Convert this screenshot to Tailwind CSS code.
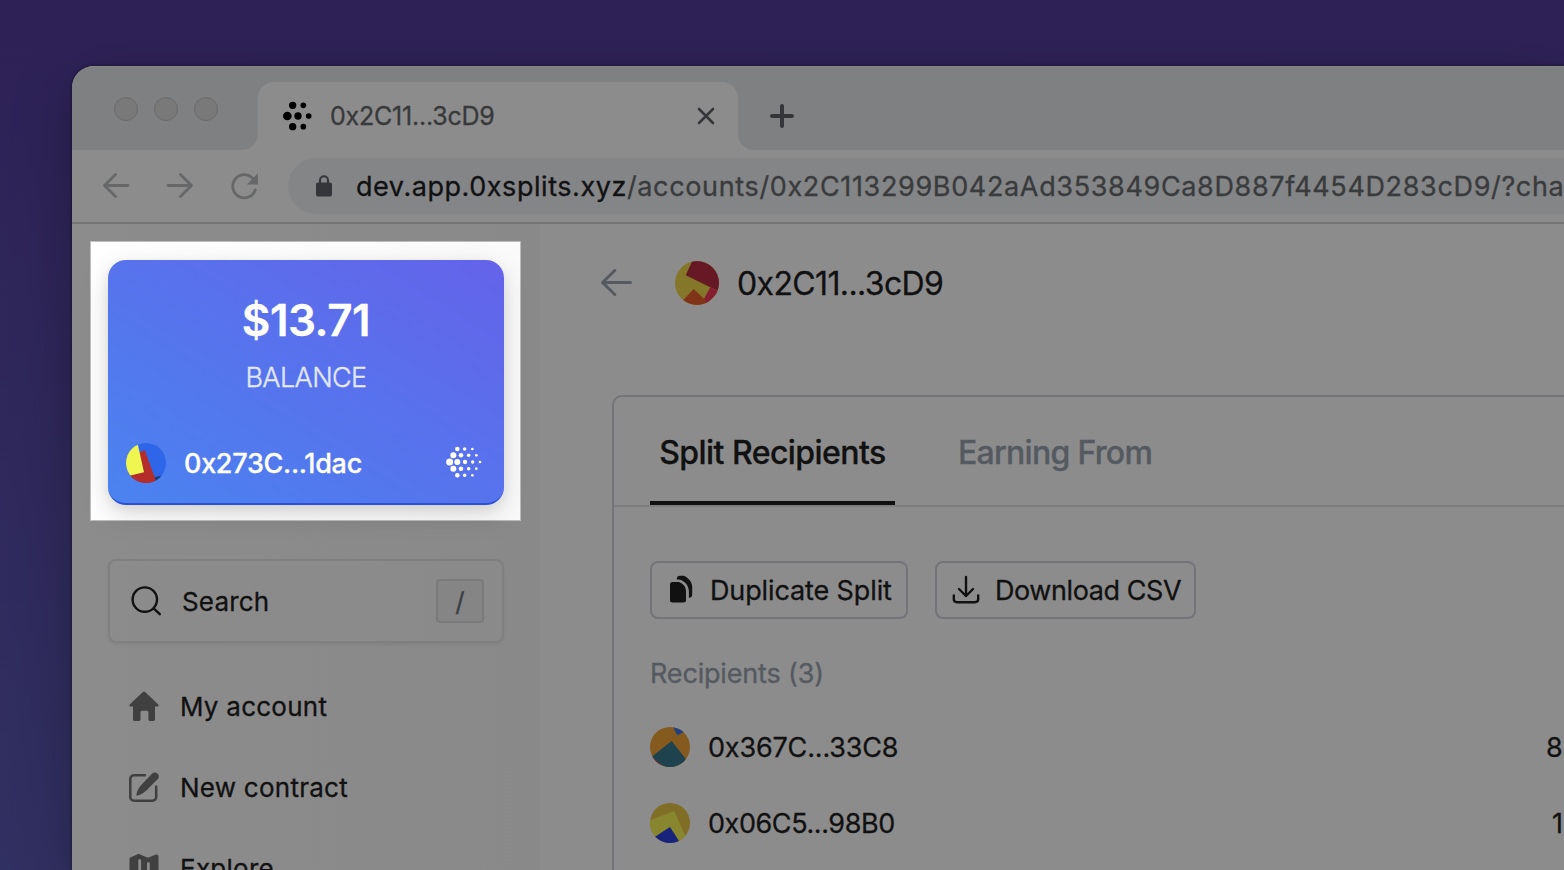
<!DOCTYPE html>
<html lang="en">
<head>
<meta charset="utf-8">
<title>0x2C11...3cD9</title>
<script src="https://cdn.jsdelivr.net/npm/@tailwindcss/browser@4"></script>
</head>
<body class="relative h-[870px] w-[1564px] overflow-hidden bg-gradient-to-b from-[#533c9c] to-[#5a58b2] pt-[66px] pl-[72px] font-['Inter',sans-serif] text-[#1f1f1f] [-webkit-text-stroke:0.3px]">
<div class="flex h-[804px] w-[1492px] flex-col overflow-hidden rounded-tl-[22px] bg-white shadow-[0_0_3px_1px_rgba(0,0,0,0.3),0_20px_60px_rgba(0,0,0,0.25)]">

  <!-- Tab strip -->
  <div class="flex h-[84px] shrink-0 border-t border-[#f4f4f4] bg-[#e7eaed]">
    <div class="flex w-[186px] gap-4 pt-[30px] pl-[42px]">
      <span class="size-6 rounded-full border border-[#bfc0bf] bg-[#dbdcdb]"></span>
      <span class="size-6 rounded-full border border-[#bfc0bf] bg-[#dbdcdb]"></span>
      <span class="size-6 rounded-full border border-[#bfc0bf] bg-[#dbdcdb]"></span>
    </div>
    <div class="relative mt-[15px] flex h-[68px] w-[480px] items-center rounded-t-[16px] bg-white pl-[25px]">
      <svg class="absolute bottom-0 -left-4 size-4" viewBox="0 0 16 16" fill="#fff"><path d="M16 0v16H0A16 16 0 0 0 16 0z"/></svg>
      <svg class="absolute -right-4 bottom-0 size-4" viewBox="0 0 16 16" fill="#fff"><path d="M0 0v16h16A16 16 0 0 1 0 0z"/></svg>
      <svg class="h-[30px] w-[29px]" viewBox="669 135 87 90" fill="#000"><circle cx="682" cy="180" r="13"/><circle cx="714" cy="180" r="11"/><circle cx="746" cy="180" r="8.5"/><circle cx="698" cy="148" r="11"/><circle cx="730" cy="148" r="8.5"/><circle cx="698" cy="212" r="11"/><circle cx="730" cy="212" r="8.5"/></svg>
      <span class="ml-[18px] text-[25px] leading-8 tracking-[-0.22px] whitespace-nowrap text-[#66686a]">0x2C11...3cD9</span>
      <svg class="absolute top-[25px] left-[439px] size-[18px]" viewBox="0 0 18 18" fill="none" stroke="#5f6368" stroke-width="2.6" stroke-linecap="round"><path d="M2 2l14 14M16 2L2 16"/></svg>
    </div>
    <svg class="mt-[37px] ml-[32px] size-6" viewBox="0 0 24 24" fill="none" stroke="#5f6368" stroke-width="4" stroke-linecap="round"><path d="M12 2v20M2 12h20"/></svg>
  </div>

  <!-- Toolbar -->
  <div class="flex h-[74px] shrink-0 items-center border-b-2 border-[#d5d6d8] bg-white pl-[30px]">
    <svg class="h-[26px] w-7 shrink-0" viewBox="0 0 28 26" fill="none" stroke="#b9bcbe" stroke-width="2.8" stroke-linecap="round" stroke-linejoin="round"><path d="M26 12.500H2.500M13.500 1.500l-11 11 11 11"/></svg>
    <svg class="ml-9 h-[26px] w-7 shrink-0" viewBox="0 0 28 26" fill="none" stroke="#b9bcbe" stroke-width="2.800" stroke-linecap="round" stroke-linejoin="round"><path d="M2 12.500h23.500M14.500 1.500l11 11-11 11"/></svg>
    <svg class="ml-[37px] h-7 w-[30px] shrink-0" viewBox="0 0 30 28" fill="none" stroke="#b9bcbe" stroke-width="2.800" stroke-linecap="round"><path d="M24.300 18A11.600 11.600 0 1 1 21.500 6"/><path d="M27 1.200v11.300H15.800z" fill="#b9bcbe" stroke="none"/></svg>
    <div class="ml-[27px] flex h-14 min-w-0 flex-1 items-center overflow-hidden rounded-l-full bg-[#f0f2f5] pl-7">
      <svg class="h-[22px] w-4 shrink-0" viewBox="0 0 16 22"><rect y="7.500" width="16" height="14" rx="2" fill="#5f6368"/><path d="M4 8V5.200a4 4 0 0 1 8 0V8" fill="none" stroke="#5f6368" stroke-width="2"/></svg>
      <span class="mt-0.5 ml-[24px] text-[27px] leading-8 tracking-[0.55px] whitespace-nowrap text-[#1f2124]">dev.app.0xsplits.xyz</span><span class="mt-0.5 text-[27px] leading-8 tracking-[0.65px] whitespace-nowrap text-[#6a6c6e]">/accounts/0x2C113299B042aAd353849Ca8D887f4454D283cD9/?chai</span>
    </div>
  </div>

  <div class="flex min-h-0 flex-1">
    <!-- Sidebar -->
    <aside class="w-[468px] shrink-0 bg-gradient-to-r from-white to-[#fafafa] px-9 pt-9">
      <div class="flex h-[245px] flex-col items-center rounded-[18px] border-b-2 border-[#2b50d8] bg-linear-to-tr/srgb from-[#4a83f0] to-[#6463e9] pt-8 text-white shadow-[0_10px_30px_rgba(0,0,0,0.13),0_4px_12px_rgba(0,0,0,0.08)]">
        <div class="text-[44px] leading-[56px] font-semibold tracking-[-0.5px]">$13.71</div>
        <div class="mt-[14px] text-[27px] leading-8 font-light tracking-[-0.6px] text-white/80">BALANCE</div>
        <div class="mt-[49px] flex h-10 w-full items-center pr-[22px] pl-[18px]">
          <svg class="size-10" viewBox="0 0 40 40"><clipPath id="a"><circle cx="20" cy="20" r="20"/></clipPath><g clip-path="url(#a)"><path fill="#2f65e8" d="M0 0h40v40H0z"/><path fill="#173f6b" d="M28 34.500l12-3V40H28z"/><path fill="#b52d2a" d="M13.500 9.500L18.700 7l12 33H0v-8z"/><path fill="#eff652" d="M11.500 0l6.500 29.200L0 33.600V0z"/></g></svg>
          <span class="mt-0.5 ml-[18px] text-[27px] leading-8 font-medium tracking-[-0.3px] whitespace-nowrap">0x273C...1dac</span>
          <svg class="-mt-0.5 ml-auto h-8 w-9" viewBox="77 49 108 96" fill="#fff"><circle cx="88" cy="97" r="10.500"/><circle cx="111" cy="97" r="9"/><circle cx="134" cy="97" r="6.500"/><circle cx="157" cy="97" r="5"/><circle cx="179" cy="97" r="4"/><circle cx="99" cy="77" r="9"/><circle cx="122" cy="77" r="6.800"/><circle cx="145" cy="77" r="5.300"/><circle cx="168" cy="77" r="4"/><circle cx="99" cy="117" r="9"/><circle cx="122" cy="117" r="6.800"/><circle cx="145" cy="117" r="5.300"/><circle cx="168" cy="117" r="4"/><circle cx="111" cy="58" r="6.800"/><circle cx="133" cy="58" r="5.300"/><circle cx="156" cy="58" r="4"/><circle cx="111" cy="137" r="6.800"/><circle cx="133" cy="137" r="5.300"/><circle cx="156" cy="137" r="4"/></svg>
        </div>
      </div>

      <div class="mt-[54px] flex h-[84px] items-center rounded-lg border-2 border-[#e7e7e7] bg-white/40 pr-[18px] pl-5 shadow-[0_2px_4px_rgba(0,0,0,0.06)]">
        <svg class="size-8" viewBox="0 0 32 32" fill="none" stroke="#1f1f1f" stroke-width="2.400" stroke-linecap="round"><circle cx="14.800" cy="14.600" r="12.200"/><path d="M23.800 23.600l6 5.600"/></svg>
        <span class="mt-0.5 ml-5 text-[26px] leading-8 tracking-[0.15px]">Search</span>
        <kbd class="ml-auto flex h-11 w-12 items-center justify-center rounded border-2 border-[#dfdfdf] bg-[#f3f3f3] pt-0.5 font-['Inter',sans-serif] text-[26px] leading-8 text-[#6b7280]">/</kbd>
      </div>

      <nav class="mt-[23px] pl-5 text-[26px] leading-8 tracking-[0.25px]">
        <a class="flex h-[81px] items-center gap-5">
          <svg class="-mt-0.5 size-8" viewBox="0 0 32 32" fill="#757575"><path d="M14.600 2.200a2 2 0 0 1 2.800 0L30.300 14.600c.8.900.3 2-.8 2H27v12.600c0 1.100-.7 1.800-1.700 1.800h-3.200c-1 0-1.700-.7-1.700-1.800v-6.700c0-1-.6-1.700-1.600-1.700h-4.600c-1 0-1.700.7-1.700 1.700v6.700c0 1.100-.7 1.800-1.700 1.800H6.700C5.700 31 5 30.300 5 29.200V16.600H2.500c-1.100 0-1.600-1.100-.8-2z"/></svg>
          <span>My account</span>
        </a>
        <a class="flex h-[81px] items-center gap-5">
          <svg class="-mt-0.5 size-8" viewBox="0 0 32 32"><path d="M17 4.300H6A3.700 3.700 0 0 0 2.300 8v18A3.700 3.700 0 0 0 6 29.700h18.500a3.700 3.700 0 0 0 3.700-3.700V15.500" fill="none" stroke="#757575" stroke-width="2.500" stroke-linecap="round"/><path fill="#757575" d="M24.200 2.600a3.900 3.900 0 0 1 5.600 5.400L18.600 19.200c-2.500 2.600-5.900 4.600-9 5.300-.9.200-1.500-.4-1.200-1.300.9-3.400 2.400-6.800 5-9.500z"/></svg>
          <span>New contract</span>
        </a>
        <a class="flex h-[81px] items-center gap-5">
          <svg class="size-8" viewBox="0 0 32 32" fill="#757575"><path fill-rule="evenodd" d="M9.500 1.300c1-.4 1.800-.3 2.700.1l7 3c.5.200.9.200 1.400 0l7.200-2.800c1.500-.5 2.700.3 2.700 1.800v21.500c0 1-.5 1.700-1.400 2.100l-7.300 3.200c-.9.400-1.700.4-2.600 0l-7-3.100c-.5-.2-1-.2-1.400 0l-6.600 2.700c-1.500.6-2.700-.2-2.700-1.800V6.400c0-1 .5-1.800 1.400-2.200zM10.300 7.500v15c0 1.800 2.800 1.800 2.800 0v-15c0-1.800-2.800-1.800-2.800 0zm8.700 3v15c0 1.800 2.800 1.800 2.800 0v-15c0-1.800-2.800-1.800-2.800 0z"/></svg>
          <span>Explore</span>
        </a>
      </nav>
    </aside>

    <!-- Account -->
    <main class="min-w-0 flex-1 overflow-hidden pl-[60px]">
      <div class="flex h-[118px] items-center">
        <svg class="h-7 w-8" viewBox="0 0 32 28" fill="none" stroke="#9ca3af" stroke-width="3" stroke-linecap="round" stroke-linejoin="round"><path d="M30.500 13.500H2.500M14.800 1.500L2.500 13.500l12.300 12"/></svg>
        <svg class="ml-[43px] size-11" viewBox="0 0 44 44"><clipPath id="b"><circle cx="22" cy="22" r="22"/></clipPath><g clip-path="url(#b)"><path fill="#f2d94c" d="M0 0h44v44H0z"/><path fill="#bb2f43" d="M17.300 0l-6.600 14.300L44 30.500V0z"/><path fill="#ea5f2b" d="M18.700 28L36 44.500H3z"/><path fill="#f5385a" d="M35.300 26.300L29 37.700l3 5 12-12z"/></g></svg>
        <span class="mt-0.5 ml-[18px] text-[32px] leading-10 tracking-[-0.62px] whitespace-nowrap">0x2C11...3cD9</span>
      </div>

      <section class="mt-[53px] ml-3 h-[600px] w-[1100px] rounded-[10px] border-2 border-[#d1d3dc]">
        <div class="flex border-b-2 border-[#e3e4e8] pl-9 text-[32px] leading-10 font-medium tracking-[-0.55px]">
          <div class="flex h-[108px] w-[245px] items-center justify-center border-b-4 border-[#1f1f1f] pt-[7px] whitespace-nowrap">Split Recipients</div>
          <div class="flex h-[108px] items-center pt-[3px] pl-[63px] tracking-[-0.72px] whitespace-nowrap text-[#9ca3af]">Earning From</div>
        </div>
        <div class="pt-[54px] pl-9">
          <div class="flex gap-[27px] text-[27px] leading-8">
            <div class="flex h-[58px] w-[258px] items-center rounded-lg border-2 border-[#d1d3dc] pl-[17px] whitespace-nowrap">
              <svg class="h-8 w-6" viewBox="0 0 24 32" fill="#1f1f1f"><path d="M3.500 10h6.200c4 .9 7.300 4.700 7.300 9.500v8.500a2.500 2.500 0 0 1-2.500 2.500h-11A2.500 2.500 0 0 1 1 28V12.500A2.500 2.500 0 0 1 3.500 10z" transform="translate(0 -2)"/><path d="M7.800 5.500C7.500 3 8.800 1.700 11 1.700h4c5 2.600 8.200 6.300 8.200 11.500v7.300c0 2-1.200 3.300-3.300 3.400v-6.200c0-6.500-4.500-11-10-12.200z"/></svg>
              <span class="mt-0.5 ml-[17px] tracking-[-0.12px]">Duplicate Split</span>
            </div>
            <div class="flex h-[58px] w-[261px] items-center rounded-lg border-2 border-[#d1d3dc] pl-[15px] whitespace-nowrap">
              <svg class="-mt-0.5 h-8 w-7" viewBox="0 0 28 32" fill="none" stroke="#1f1f1f" stroke-width="2.400" stroke-linecap="round" stroke-linejoin="round"><path d="M14 4v19M7 16l7 7 7-7M1.800 22.500v3.500c0 2 1.200 3.200 3.200 3.200h18c2 0 3.200-1.200 3.200-3.200v-3.500"/></svg>
              <span class="mt-0.5 ml-[15px] tracking-[-0.42px]">Download CSV</span>
            </div>
          </div>
          <div class="mt-[35px] text-[27px] leading-10 tracking-[-0.17px] text-[#9ca3af]">Recipients (3)</div>
          <div class="mt-[15px] text-[27px] leading-8">
            <div class="flex h-[76px] items-center">
              <svg class="size-10 shrink-0" viewBox="0 0 40 40"><clipPath id="c"><circle cx="20" cy="20" r="20"/></clipPath><g clip-path="url(#c)"><path fill="#f2a43a" d="M0 0h40v40H0z"/><path fill="#377a91" d="M21.700 14L42 40H10L0 31z"/><path fill="#f7454c" d="M0 28.500L14 40H0z"/><path fill="#3e74f0" d="M23 0l4.300 8.300L36 4V0z"/></g></svg>
              <span class="mt-0.5 ml-[18px] w-[838px] shrink-0 tracking-[-0.17px]">0x367C...33C8</span><span class="mt-0.5">88.0%</span>
            </div>
            <div class="flex h-[76px] items-center">
              <svg class="size-10 shrink-0" viewBox="0 0 40 40"><clipPath id="d"><circle cx="20" cy="20" r="20"/></clipPath><g clip-path="url(#d)"><path fill="#e9c846" d="M0 0h40v40H0z"/><path fill="#f8f455" d="M0 17.300L24.300 8 37 37l-8 5H0z"/><path fill="#2c41e0" d="M20 24l11 17H0v-4z"/></g></svg>
              <span class="mt-0.5 ml-[18px] w-[844px] shrink-0 tracking-[-0.42px]">0x06C5...98B0</span><span class="mt-0.5 tracking-[2px]">10.0%</span>
            </div>
          </div>
        </div>
      </section>
    </main>
  </div>
</div>

<!-- Spotlight over the balance card -->
<div class="pointer-events-none absolute top-[241px] left-[90px] h-[280px] w-[431px] border border-black/25 shadow-[0_0_0_2000px_rgba(0,0,0,0.45)]"></div>
</body>
</html>
